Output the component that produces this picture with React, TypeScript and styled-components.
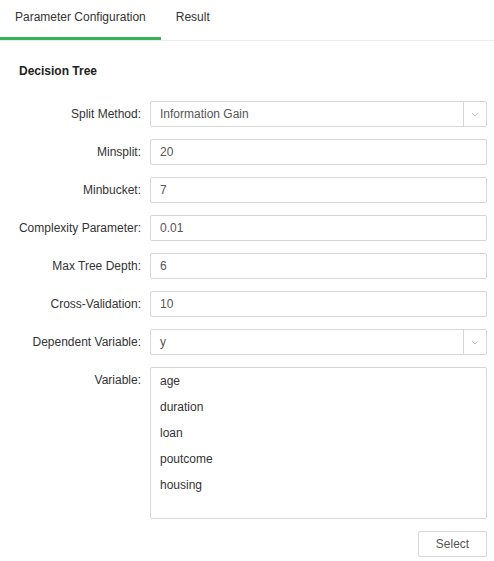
import { Fragment } from "react";
import styled, { createGlobalStyle } from "styled-components";

const GlobalStyle = createGlobalStyle`
  body {
    margin: 0;
    background: #fff;
    font-family: "Liberation Sans", Arial, sans-serif;
    font-size: 12px;
    color: #333;
  }
`;

const Page = styled.div`
  width: 494px;
`;

const Tabs = styled.div`
  display: flex;
  height: 40px;
  border-bottom: 1px solid #ececec;
`;

const Tab = styled.div<{ $active?: boolean }>`
  padding: 0 15px;
  height: 37px;
  line-height: 35px;
  font-size: 12px;
  color: #333;
  border-bottom: 3px solid ${(p) => (p.$active ? "#36b35a" : "transparent")};
  margin-bottom: -1px;
  box-sizing: content-box;
`;

const Title = styled.div`
  padding: 23px 0 0 19px;
  font-weight: bold;
  font-size: 12px;
  color: #222;
  height: 37px;
  box-sizing: border-box;
`;

const Form = styled.div`
  display: grid;
  grid-template-columns: 141px 1fr;
  column-gap: 9px;
  row-gap: 12px;
  padding: 23px 7px 0 0;
`;

const Label = styled.div`
  text-align: right;
  line-height: 26px;
  color: #333;
  white-space: nowrap;
`;

const Field = styled.div`
  height: 26px;
  border: 1px solid #d6d6d6;
  border-radius: 2px;
  box-sizing: border-box;
  display: flex;
  align-items: center;
  color: #555;
`;

const Value = styled.span`
  flex: 1;
  padding-left: 9px;
`;

const Arrow = styled.span`
  width: 22px;
  height: 100%;
  border-left: 1px solid #d6d6d6;
  display: flex;
  align-items: center;
  justify-content: center;
`;

const ListBox = styled.div`
  height: 152px;
  border: 1px solid #d6d6d6;
  border-radius: 2px;
  box-sizing: border-box;
`;

const ListItem = styled.div`
  line-height: 26px;
  padding-left: 9px;
  color: #333;
`;

const Footer = styled.div`
  display: flex;
  justify-content: flex-end;
  padding: 12px 7px 0 0;
`;

const Button = styled.button`
  width: 69px;
  height: 26px;
  border: 1px solid #d6d6d6;
  border-radius: 2px;
  background: #fff;
  font-family: inherit;
  font-size: 12px;
  color: #555;
`;

const Chevron = () => (
  <svg width="8" height="5" viewBox="0 0 8 5">
    <path d="M1 1 L4 4 L7 1" fill="none" stroke="#c4c4c4" strokeWidth="1" />
  </svg>
);

const rows: { label: string; value: string; select?: boolean }[] = [
  { label: "Split Method:", value: "Information Gain", select: true },
  { label: "Minsplit:", value: "20" },
  { label: "Minbucket:", value: "7" },
  { label: "Complexity Parameter:", value: "0.01" },
  { label: "Max Tree Depth:", value: "6" },
  { label: "Cross-Validation:", value: "10" },
  { label: "Dependent Variable:", value: "y", select: true },
];

const variables = ["age", "duration", "loan", "poutcome", "housing"];

export default function App() {
  return (
    <Page>
      <GlobalStyle />
      <Tabs>
        <Tab $active>Parameter Configuration</Tab>
        <Tab>Result</Tab>
      </Tabs>
      <Title>Decision Tree</Title>
      <Form>
        {rows.map((r) => (
          <Fragment key={r.label}>
            <Label>{r.label}</Label>
            <Field>
              <Value>{r.value}</Value>
              {r.select && (
                <Arrow>
                  <Chevron />
                </Arrow>
              )}
            </Field>
          </Fragment>
        ))}
        <Label>Variable:</Label>
        <ListBox>
          {variables.map((v) => (
            <ListItem key={v}>{v}</ListItem>
          ))}
        </ListBox>
      </Form>
      <Footer>
        <Button>Select</Button>
      </Footer>
    </Page>
  );
}
